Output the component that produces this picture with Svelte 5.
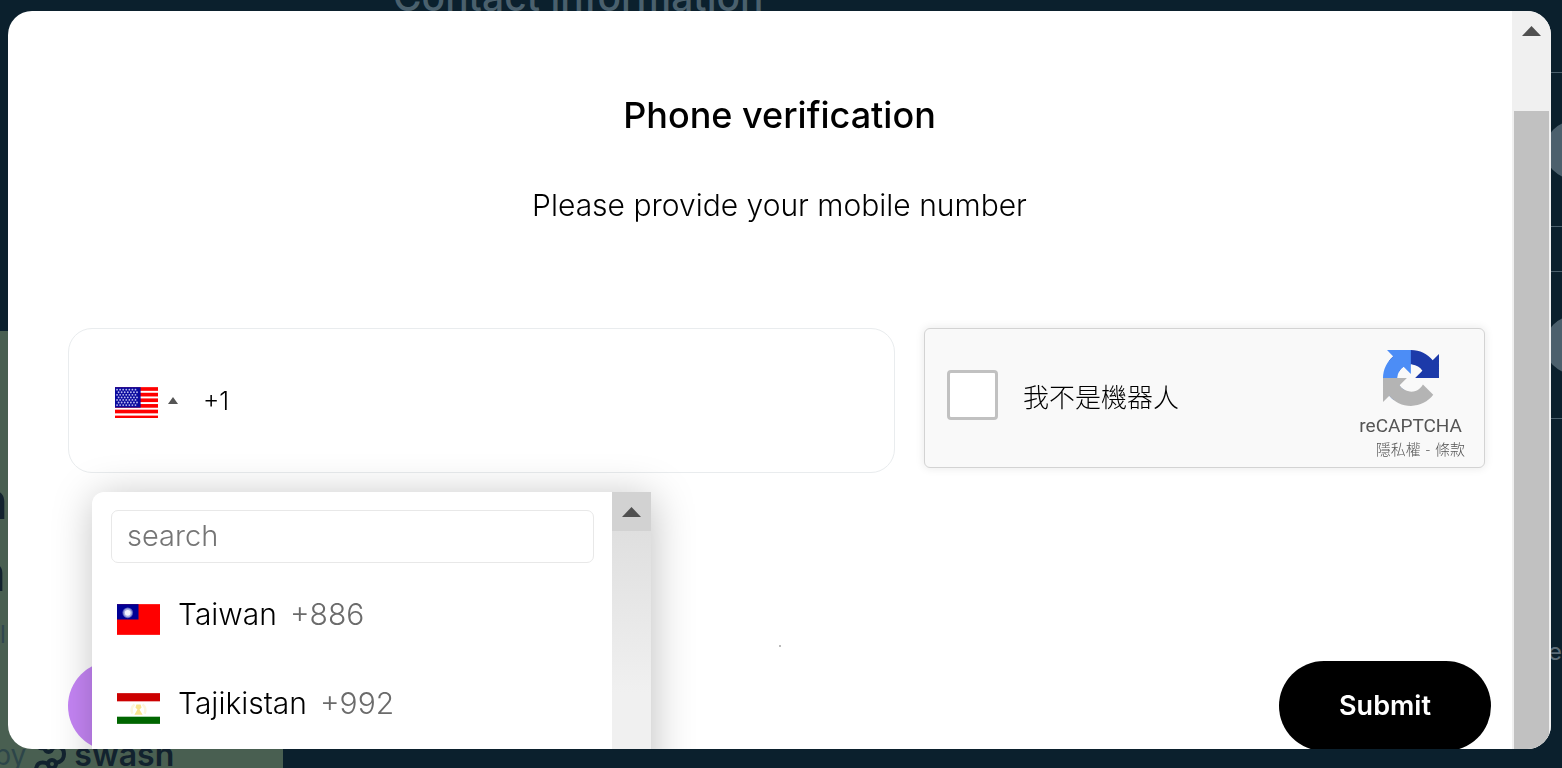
<script>
  let phone = $state('+1');
  let query = $state('');
  let human = $state(false);

  const countries = [
    { id: 'tw', name: 'Taiwan', code: '+886' },
    { id: 'tj', name: 'Tajikistan', code: '+992' }
  ];
  const shown = $derived(
    countries.filter((c) => c.name.toLowerCase().includes(query.toLowerCase()))
  );
</script>

{#snippet flag(id)}
  <svg class="flag" viewBox="0 0 42 30" aria-hidden="true">
    {#if id === 'us'}
      <rect width="42" height="30" fill="#fff" />
      {#each [0, 5.5, 11, 16.5, 22, 27.8] as y}
        <rect {y} width="42" height="3.6" fill="#f00" />
      {/each}
      <rect width="25" height="20" fill="#0a0a9e" />
      {#each [2.5, 5, 7.5, 10, 12.5, 15, 17.5] as y, r}
        {#each [2, 5, 8, 11, 14, 17, 20] as x}
          <circle cx={x + (r % 2) * 1.5} cy={y} r="0.9" fill="#b9b9ee" />
        {/each}
      {/each}
    {:else if id === 'tw'}
      <rect width="42" height="30" fill="#f00" />
      <rect width="21" height="15" fill="#000095" />
      <circle cx="10.5" cy="8.5" r="5.2" fill="#5a60c0" />
      <circle cx="10.5" cy="8.5" r="4.2" fill="#a9aee0" />
      <circle cx="10.5" cy="8.5" r="2.8" fill="#f4f4ff" />
    {:else}
      <rect width="42" height="30" fill="#fff" />
      <rect width="42" height="8" fill="#c00" />
      <rect y="23" width="42" height="7" fill="#060" />
      <path d="M15 20a8 8 0 0 1 2-9M27 20a8 8 0 0 0-2-9" fill="none" stroke="#fdf6dc" stroke-width="2.500" />
      <path d="M19 11h4l1 3-2 2 3 5h-8l3-5-2-2z" fill="#f9e38e" />
    {/if}
  </svg>
{/snippet}

{#snippet arrow()}
  <svg class="arrow" viewBox="0 0 19 10" aria-hidden="true"><path d="M0 10 9.5 0 19 10z" fill="#505050" /></svg>
{/snippet}

<div class="page">
  <aside class="side">
    <p class="big">n</p>
    <p class="big second">a</p>
    <p class="small">l</p>
    <div class="brand">
      <span class="by">by</span>
      <svg viewBox="0 0 32 32" width="32" height="32" fill="none" stroke="#12222e" stroke-width="4" aria-hidden="true">
        <path d="M2 2c0 6 4 8 8 7M19 9c8-3 11 1 11 6s-3 8-8 9" />
        <circle cx="14.500" cy="9" r="4" />
        <path d="M2 31c0-8 7-9 12-6" />
        <circle cx="18" cy="25" r="4" />
      </svg>
      <span class="name">swash</span>
    </div>
  </aside>
  <main class="back"><h2>Contact information</h2></main>
  <div class="rail">
    <div class="cell"><i></i></div>
    <div class="cell thin"></div>
    <div class="cell"><i></i></div>
    <div class="cell last"><span>e</span></div>
  </div>
</div>

<div class="modal" role="dialog" aria-modal="true" aria-labelledby="title">
  <div class="content">
    <h1 id="title">Phone verification</h1>
    <p class="lead">Please provide your mobile number</p>

    <div class="row">
      <div class="phone">
        <button class="picker" type="button" aria-label="Country" aria-expanded="true">
          {@render flag('us')}
          <svg class="caret" viewBox="0 0 10 7" aria-hidden="true"><path d="M0 7 5 0l5 7z" fill="#555" /></svg>
        </button>
        <input class="number" type="tel" aria-label="Mobile number" bind:value={phone} />

        <div class="menu">
          <div class="list">
            <input class="search" type="text" placeholder="search" aria-label="Search country" bind:value={query} />
            <ul>
              {#each shown as c (c.id)}
                <li>
                  <button type="button">
                    {@render flag(c.id)}
                    <span>{c.name}</span>
                    <span class="code">{c.code}</span>
                  </button>
                </li>
              {/each}
            </ul>
          </div>
          <div class="track">
            <div class="up">{@render arrow()}</div>
          </div>
        </div>
      </div>

      <div class="captcha">
        <label>
          <input type="checkbox" bind:checked={human} />
          <span>我不是機器人</span>
        </label>
        <div class="badge">
          <svg viewBox="0 0 64 64" width="56" height="56" aria-hidden="true">
            <path fill="#1c3aa9" d="M64 31.955l-.033-1.37V4.687l-7.16 7.16C50.948 4.674 42.033.093 32.05.093c-10.4 0-19.622 4.96-25.458 12.64l11.736 11.86a15.55 15.55 0 0 1 4.754-5.334c2.05-1.6 4.952-2.906 8.968-2.906.485 0 .86.057 1.135.163 4.976.393 9.288 3.14 11.828 7.124l-8.307 8.307L64 31.953" />
            <path fill="#4c8df6" d="M31.862.094l-1.37.033H4.594l7.16 7.16C4.58 13.147 0 22.06 0 32.046c0 10.4 4.96 19.622 12.64 25.458L24.5 45.768a15.55 15.55 0 0 1-5.334-4.754c-1.6-2.05-2.906-4.952-2.906-8.968 0-.485.057-.86.163-1.135.393-4.976 3.14-9.288 7.124-11.828l8.307 8.307L31.86.095" />
            <path fill="#b4b4b4" d="M.001 32.045l.033 1.37v25.898l7.16-7.16c5.86 7.173 14.774 11.754 24.76 11.754 10.4 0 19.622-4.96 25.458-12.64l-11.736-11.86a15.55 15.55 0 0 1-4.754 5.334c-2.05 1.6-4.952 2.906-8.968 2.906-.485 0-.86-.057-1.135-.163-4.976-.393-9.288-3.14-11.828-7.124l8.307-8.307c-10.522.04-22.4.066-27.295-.005" />
          </svg>
          <div class="word">reCAPTCHA</div>
          <div class="links"><a href="#privacy">隱私權</a><span>-</span><a href="#terms">條款</a></div>
        </div>
      </div>
    </div>

    <div class="dot"></div>

    <div class="actions">
      <button class="pill cancel" type="button" aria-label="Cancel"></button>
      <button class="pill submit" type="button">Submit</button>
    </div>
  </div>
  <div class="scroll">
    <div class="cap">{@render arrow()}</div>
    <div class="thumb"></div>
  </div>
</div>

<style>
  :global(body) {
    background: #0b202d;
    overflow: hidden;
    font-family: Inter, "Noto Sans CJK TC", sans-serif;
    color: #000;
  }
  h1, h2, p, ul { margin: 0; padding: 0; }
  button, input { font: inherit; color: inherit; box-sizing: border-box; }

  .page {
    display: grid;
    grid-template-columns: 283px 1fr 11px;
    height: 100vh;
    overflow: hidden;
  }
  .side {
    margin-top: 331px;
    background: #495f51;
    color: #12222e;
    display: flex;
    flex-direction: column;
    overflow: hidden;
  }
  .big { font-size: 52px; font-weight: 600; line-height: 72px; margin: 134px 0 0 -24px; }
  .big.second { margin-top: 0; }
  .small { font-size: 24px; line-height: 32px; margin-top: 10px; color: #30474f; }
  .brand {
    flex: none;
    margin-top: auto;
    display: flex;
    align-items: center;
    gap: 8px;
    height: 26px;
    line-height: 26px;
    margin-left: -6px;
  }
  .by { font-size: 28px; color: #2d4549; }
  .name { font-size: 32px; font-weight: 600; }
  .back { padding-left: 110px; }
  .back h2 { margin-top: -28px; font-size: 39px; font-weight: 500; line-height: 50px; color: #4a606d; white-space: nowrap; }
  .rail { padding-top: 72px; color: #5d6d78; overflow: hidden; }
  .cell { height: 153px; border-top: 1px solid #4c606d; display: flex; align-items: center; }
  .cell.thin { height: 44px; }
  .cell:nth-child(3) { height: 146px; }
  .cell.last { height: 464px; }
  .cell i { flex: none; width: 58px; height: 58px; margin-left: -6px; border-radius: 50%; background: #4c606d; }
  .cell span { font-size: 24px; margin-left: -3px; }

  .modal {
    position: fixed;
    inset: 11px 11px 19px 8px;
    display: flex;
    background: #fff;
    border-radius: 24px;
    overflow: hidden;
  }
  .content { flex: 1; min-width: 0; padding: 80px 21px 0 60px; }
  h1 { font-size: 36px; font-weight: 500; line-height: 48px; text-align: center; }
  .lead { margin-top: 36px; font-size: 30px; font-weight: 300; line-height: 60px; text-align: center; }

  .row {
    margin-top: 93px;
    display: grid;
    grid-template-columns: 1fr 561px;
    gap: 29px;
    align-items: start;
    padding-right: 6px;
  }
  .phone {
    position: relative;
    display: flex;
    align-items: center;
    height: 145px;
    box-sizing: border-box;
    border: 1px solid #e9ecee;
    border-radius: 24px;
    padding-left: 46px;
  }
  .picker { display: flex; align-items: center; gap: 10px; border: 0; background: none; padding: 0; }
  .picker .flag { margin-top: 3px; }
  .flag { display: block; width: 43px; height: 31px; flex: none; }
  .caret { width: 10px; height: 7px; }
  .number { flex: 1; min-width: 0; margin-left: 25px; border: 0; background: none; outline: none; padding: 0; font-size: 25px; font-weight: 300; }

  .menu {
    position: absolute;
    z-index: 2;
    left: 23px;
    top: 163px;
    width: 559px;
    display: flex;
    background: #fff;
    border-radius: 12px 0 0 0;
    box-shadow: 2px 5px 42px rgba(0, 0, 0, 0.25);
  }
  .list { flex: 1; padding: 18px 18px 89px 19px; }
  .search {
    display: block;
    width: 100%;
    height: 53px;
    border: 1px solid #e8e8e8;
    border-radius: 7px;
    padding: 0 15px 2px;
    font-size: 29px;
    font-weight: 300;
    outline: none;
  }
  .search::placeholder { color: #757575; opacity: 1; }
  ul { list-style: none; padding-top: 6px; }
  li button {
    display: flex;
    align-items: center;
    width: 100%;
    height: 89px;
    border: 0;
    background: none;
    padding: 0 0 0 6px;
    font-size: 30px;
    font-weight: 300;
    text-align: left;
  }
  li .flag { margin: 12px 18px 0 0; }
  .code { margin-left: 13px; color: #6b6b6b; }
  .track { width: 39px; background: linear-gradient(#dfdfdf 39px, #f0f0f0 200px); }
  .up { height: 39px; background: #d2d2d2; display: grid; place-items: center; }
  .arrow { width: 19px; height: 10px; }

  .captcha {
    display: flex;
    justify-content: space-between;
    height: 140px;
    box-sizing: border-box;
    background: #f9f9f9;
    border: 1px solid #d3d3d3;
    border-radius: 6px;
    box-shadow: 0 0 9px 1px rgba(0, 0, 0, 0.08);
    padding: 0 22px;
  }
  .captcha label { display: flex; align-items: center; gap: 25px; padding-bottom: 6px; font-size: 26px; font-weight: 300; }
  .captcha label input {
    appearance: none;
    width: 51px;
    height: 50px;
    margin: 0;
    border: 3px solid #c1c1c1;
    border-radius: 4px;
    background: #fff;
  }
  .badge { display: flex; flex-direction: column; align-items: center; padding-top: 21px; color: #555; font-family: Roboto, "Noto Sans CJK TC", sans-serif; }
  .word { font-size: 19px; line-height: 24px; margin-top: 8px; }
  .links { display: flex; gap: 5px; font-size: 15px; line-height: 24px; align-self: flex-end; margin-right: -3px; font-weight: 300; }
  .links a { color: inherit; text-decoration: none; }

  .dot { width: 2px; height: 2px; margin: 172px auto 0; background: #bbb; }
  .actions { margin-top: 14px; display: flex; justify-content: space-between; }
  .pill { width: 212px; height: 90px; border: 0; border-radius: 45px; font-size: 27px; font-weight: 600; }
  .cancel { background: #c585f5; }
  .submit { background: #000; color: #fff; padding-bottom: 3px; }

  .scroll { width: 39px; background: #f0f0f0; display: flex; flex-direction: column; }
  .cap { height: 39px; margin-bottom: 61px; display: grid; place-items: center; }
  .thumb { flex: 1; margin: 0 2px; background: #c1c1c1; }
</style>
